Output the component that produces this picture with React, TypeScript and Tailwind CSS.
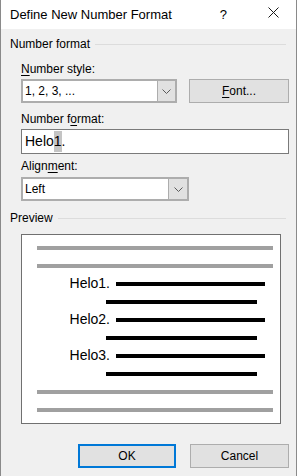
import React from 'react';

const font = "font-['Liberation_Sans',Arial,sans-serif]";

function Chevron() {
  return (
    <svg width="9" height="5" viewBox="0 0 9 5" className="block">
      <path d="M0.5 0.5 L4.5 4.5 L8.5 0.5" fill="none" stroke="#5a5a5a" strokeWidth="1" />
    </svg>
  );
}

function Combo({ value, width, buttonWidth }: { value: string; width: string; buttonWidth: string }) {
  return (
    <div className={`flex h-[24px] ${width} border-2 border-[#adadad] bg-white`}>
      <div className="flex-1 flex items-center pl-[2px] text-[12px] text-black">{value}</div>
      <div className={`${buttonWidth} flex items-center justify-center border-l border-[#adadad] bg-[#e1e1e1]`}>
        <Chevron />
      </div>
    </div>
  );
}

function GroupHeader({ label, className }: { label: string; className?: string }) {
  return (
    <div className={`flex items-center h-[16px] pl-[9px] pr-[10px] ${className ?? ''}`}>
      <span className="text-[12px] text-black whitespace-nowrap">{label}</span>
      <div className="flex-1 ml-[5px] h-px bg-[#dcdcdc]" />
    </div>
  );
}

function Bar({ kind }: { kind: 'gray' | 'indent' }) {
  if (kind === 'gray') return <div className="h-[4px] ml-[15px] w-[236px] bg-[#a0a0a0]" />;
  return <div className="h-[4px] ml-[84px] w-[151px] bg-black" />;
}

function Item({ label }: { label: string }) {
  return (
    <div className="h-[4px] flex items-center">
      <span className="w-[88px] text-right text-[14px] leading-none text-black mb-[3px] whitespace-nowrap">{label}</span>
      <div className="ml-[6px] h-[4px] w-[149px] bg-black" />
    </div>
  );
}

export default function App() {
  return (
    <div className={`w-[299px] h-[476px] flex bg-white overflow-hidden ${font}`}>
      <div className="w-[297px] h-full flex flex-col border-l border-r border-[#8a8a8a]">
        {/* title bar */}
        <div className="h-[29px] flex items-center bg-white">
          <span className="pl-[9px] text-[13px] text-black">Define New Number Format</span>
          <span className="ml-auto mr-[41px] text-[13px] text-black">?</span>
          <svg width="11" height="11" viewBox="0 0 11 11" className="mr-[17px] mb-[4px]">
            <path d="M0.5 0.5 L10.5 10.5 M10.5 0.5 L0.5 10.5" stroke="#1a1a1a" strokeWidth="1" />
          </svg>
        </div>

        {/* body */}
        <div className="flex-1 flex flex-col bg-[#f0f0f0] text-[12px] text-black">
          <GroupHeader label="Number format" className="mt-[7px]" />

          <div className="pl-[20px] mt-[9px] h-[16px] leading-[16px]">
            <span className="underline underline-offset-2">N</span>umber style:
          </div>
          <div className="flex pl-[20px] mt-[2px]">
            <Combo value="1, 2, 3, ..." width="w-[156px]" buttonWidth="w-[18px]" />
            <button className="ml-[12px] w-[100px] h-[24px] bg-[#e1e1e1] border border-[#adadad] text-[12px]">
              <span className="underline underline-offset-2">F</span>ont...
            </button>
          </div>

          <div className="pl-[20px] mt-[8px] h-[16px] leading-[16px]">
            Number f<span className="underline underline-offset-2">o</span>rmat:
          </div>
          <div className="pl-[20px] mt-[2px]">
            <div className="w-[268px] h-[25px] flex items-center pl-[3px] bg-white border border-[#7a7a7a] text-[14px]">
              Helo<span className="bg-[#c4c4c4]">1</span>.
            </div>
          </div>

          <div className="pl-[20px] mt-[4px] h-[16px] leading-[16px]">
            Align<span className="underline underline-offset-2">m</span>ent:
          </div>
          <div className="pl-[20px] mt-[3px]">
            <Combo value="Left" width="w-[168px]" buttonWidth="w-[19px]" />
          </div>

          <GroupHeader label="Preview" className="mt-[9px]" />

          <div className="pl-[20px] mt-[8px]">
            <div className="w-[260px] h-[190px] bg-white border border-[#707070] pt-[11px] flex flex-col gap-[14px]">
              <Bar kind="gray" />
              <Bar kind="gray" />
              <Item label="Helo1." />
              <Bar kind="indent" />
              <Item label="Helo2." />
              <Bar kind="indent" />
              <Item label="Helo3." />
              <Bar kind="indent" />
              <Bar kind="gray" />
              <Bar kind="gray" />
            </div>
          </div>

          <div className="flex pl-[77px] mt-[20px]">
            <button className="w-[98px] h-[24px] bg-[#e1e1e1] border-2 border-[#0078d7] text-[12px]">OK</button>
            <button className="ml-[14px] w-[99px] h-[24px] bg-[#e1e1e1] border border-[#adadad] text-[12px]">Cancel</button>
          </div>
        </div>
      </div>
    </div>
  );
}
